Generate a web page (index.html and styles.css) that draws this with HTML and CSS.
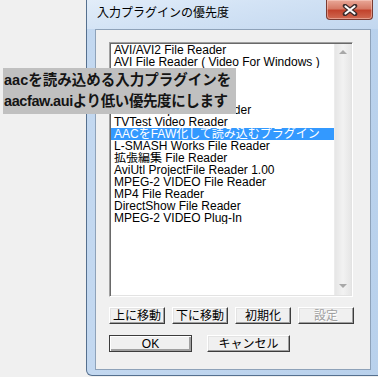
FILE: index.html
```html
<!DOCTYPE html>
<html lang="ja">
<head>
<meta charset="utf-8">
<title>入力プラグインの優先度</title>
<link rel="stylesheet" href="styles.css">
</head>
<body>
<div class="window">
  <div class="titlebar">
    <span class="title">入力プラグインの優先度</span>
    <div class="close">
      <svg width="18" height="12" viewBox="0 0 18 12">
        <path d="M4 2 L14 10 M14 2 L4 10" stroke="#3a2a2a" stroke-width="4.5" stroke-linecap="round"/>
        <path d="M4.5 2.5 L13.5 9.5 M13.5 2.5 L4.5 9.5" stroke="#ffffff" stroke-width="2.2" stroke-linecap="round"/>
      </svg>
    </div>
  </div>
  <div class="client">
    <div class="listbox">
      <ul class="items">
        <li>AVI/AVI2 File Reader</li>
        <li>AVI File Reader ( Video For Windows )</li>
        <li>Bitmap File Reader</li>
        <li>WAVE File Reader</li>
        <li>JPEG File Reader</li>
        <li>AviUtl Project File Reader</li>
        <li>TVTest Video Reader</li>
        <li class="sel">AACをFAW化して読み込むプラグイン</li>
        <li>L-SMASH Works File Reader</li>
        <li>拡張編集 File Reader</li>
        <li>AviUtl ProjectFile Reader 1.00</li>
        <li>MPEG-2 VIDEO File Reader</li>
        <li>MP4 File Reader</li>
        <li>DirectShow File Reader</li>
        <li>MPEG-2 VIDEO Plug-In</li>
      </ul>
      <div class="scrollbar">
        <span class="arrow up"></span>
        <span class="arrow down"></span>
      </div>
    </div>
    <div class="row row1">
      <button class="btn small">上に移動</button>
      <button class="btn small">下に移動</button>
      <button class="btn small">初期化</button>
      <button class="btn small" disabled>設定</button>
    </div>
    <div class="row row2">
      <button class="btn wide default">OK</button>
      <button class="btn wide">キャンセル</button>
    </div>
  </div>
</div>
<div class="note">
  <p>aacを読み込める入力プラグインを</p>
  <p class="tight">aacfaw.auiより低い優先度にします</p>
</div>
</body>
</html>
```

FILE: styles.css
```css
* { box-sizing: border-box; }

body {
  margin: 0;
  width: 378px;
  height: 377px;
  overflow: hidden;
  position: relative;
  background: #f0f0f0;
  font-family: "Liberation Sans", "Noto Sans CJK JP", sans-serif;
  font-size: 12px;
  color: #000;
}

.window {
  margin-left: 86px;
  width: 300px;
  height: 376px;
  border: 1px solid #55708f;
  border-top: none;
  border-radius: 0 0 6px 6px;
  background: linear-gradient(to right, #c3d8f0, #b9d1ec);
  display: flex;
  flex-direction: column;
}

.titlebar {
  height: 29px;
  position: relative;
  padding: 3px 0 0 10px;
  background: linear-gradient(170deg, #e2edf9 0%, #d3e3f5 40%, #c2d7ef 100%);
}

.title {
  font-family: "Noto Sans CJK JP", sans-serif;
  font-size: 12px;
  line-height: 17px;
  color: #000;
}

.close {
  position: absolute;
  left: 239px;
  top: 0;
  width: 47px;
  height: 20px;
  border: 1px solid #7a3b32;
  border-top: none;
  border-radius: 0 0 4px 4px;
  background: linear-gradient(#e9a898 0%, #d67a66 45%, #c2432d 55%, #cf6a52 100%);
  display: flex;
  align-items: center;
  justify-content: center;
  box-shadow: inset 0 0 0 1px rgba(255, 220, 210, 0.45);
}

.client {
  margin: 0 0 5px 8px;
  width: 276px;
  height: 341px;
  border: 1px solid #8ea2b9;
  background: #f0f0f0;
  padding: 12px 0 0 13px;
}

.listbox {
  width: 244px;
  height: 255px;
  border: 1px solid;
  border-color: #a0a0a0 #ffffff #ffffff #a0a0a0;
  box-shadow: inset 1px 1px #696969, inset -1px -1px #e3e3e3;
  background: #fff;
  padding: 1px;
  display: flex;
}

.items {
  list-style: none;
  margin: 0;
  padding: 0;
  flex: 1;
}

.items li {
  height: 12px;
  line-height: 12px;
  padding-left: 3px;
  white-space: nowrap;
  overflow: hidden;
  font-size: 12px;
}

.items li.sel {
  background: #3399ff;
  color: #fff;
}

.scrollbar {
  width: 17px;
  background: linear-gradient(to right, #e6e6e6, #f2f2f2 50%, #e6e6e6);
  border-left: 1px solid #ececec;
  display: flex;
  flex-direction: column;
  justify-content: space-between;
  align-items: center;
  padding: 6px 0 7px;
}

.arrow {
  width: 0;
  height: 0;
  border-left: 4px solid transparent;
  border-right: 4px solid transparent;
}

.arrow.up { border-bottom: 4px solid #a8a8a8; }
.arrow.down { border-top: 4px solid #a8a8a8; }

.row {
  display: flex;
}

.row1 {
  margin-top: 10px;
  gap: 7px;
}

.row2 {
  margin-top: 11px;
  gap: 15px;
}

.btn {
  height: 17px;
  margin: 0;
  padding: 0;
  background: #f0f0f0;
  border: 1px solid;
  border-color: #ffffff #3c3c3c #3c3c3c #ffffff;
  box-shadow: inset -1px -1px #a0a0a0, inset 1px 1px #e3e3e3;
  font-family: "Liberation Sans", "Noto Sans CJK JP", sans-serif;
  font-size: 12px;
  line-height: 14px;
  color: #000;
}

.btn.small { width: 56px; }
.btn.wide { width: 83px; }

.btn.default {
  border-color: #3c3c3c;
  box-shadow: inset 1px 1px #ffffff, inset -2px -2px #a0a0a0;
}

.btn:disabled {
  color: #a0a0a0;
  text-shadow: 1px 1px #ffffff;
}

.note {
  position: absolute;
  left: 3px;
  top: 68px;
  width: 233px;
  height: 46px;
  background: #c0c0c0;
  padding: 2px 0 0 1px;
  font-family: "Liberation Sans", "Noto Sans CJK JP", sans-serif;
  font-weight: bold;
  font-size: 14.5px;
  color: #141414;
}

.note p {
  margin: 0;
  line-height: 21px;
  white-space: nowrap;
}

.note p.tight {
  letter-spacing: -0.4px;
}
```
